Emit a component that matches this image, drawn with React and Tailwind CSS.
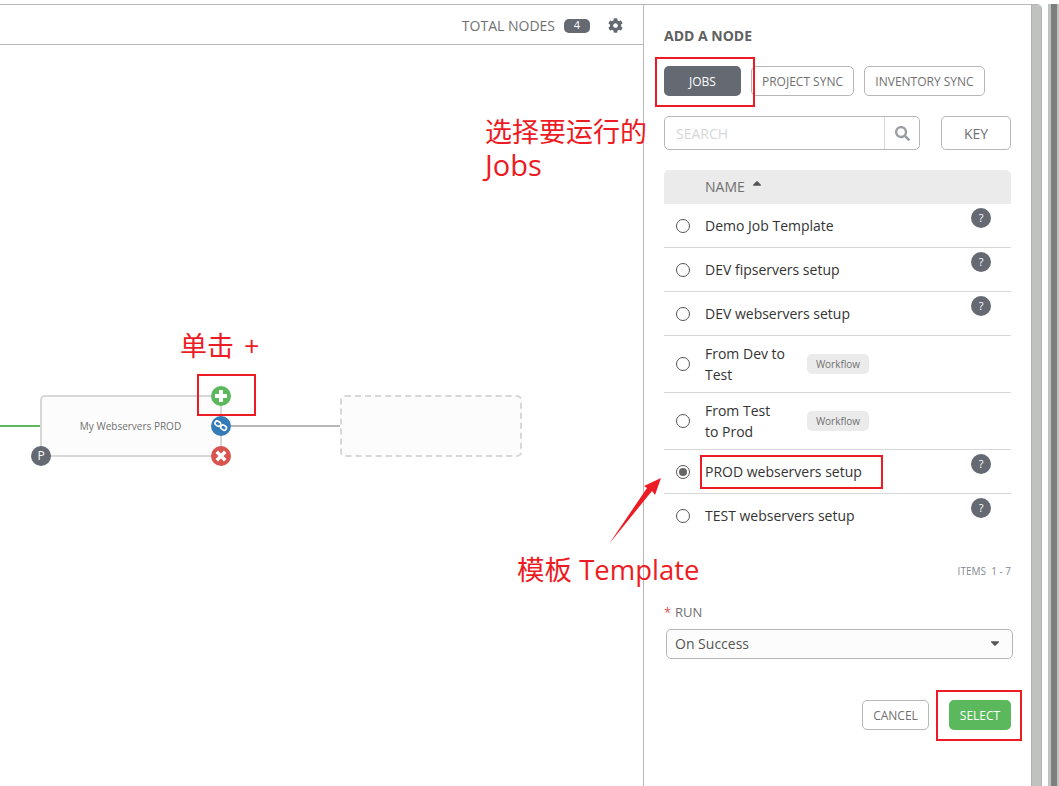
import React from "react";
import { FaCog, FaSearch, FaCaretDown, FaCaretUp } from "react-icons/fa";

const rows = [
  { name: "Demo Job Template", help: true },
  { name: "DEV fipservers setup", help: true },
  { name: "DEV webservers setup", help: true },
  { name: "From Dev to Test", wf: true },
  { name: "From Test to Prod", wf: true },
  { name: "PROD webservers setup", help: true, checked: true },
  { name: "TEST webservers setup", help: true, last: true },
];

function Row({ r }) {
  return (
    <div className={`flex relative border-b ${r.wf ? "h-[57px]" : "h-[44px]"} ${r.last ? "border-transparent" : "border-[#d7d7d7]"}`}>
      <div className="w-[41px] shrink-0 flex items-center">
        <span className="ml-[12px] w-[14px] h-[14px] rounded-full border border-[#555] flex items-center justify-center bg-white">
          {r.checked && <span className="w-[8px] h-[8px] rounded-full bg-[#666]" />}
        </span>
      </div>
      <div className={`flex items-center text-[14px] leading-[21px] text-[#333] ${r.wf ? "w-[81px] mr-[21px]" : "flex-1"}`}>{r.name}</div>
      {r.wf && (
        <div className="flex items-center">
          <span className="h-[20px] w-[62px] pt-[1px] rounded-[5px] bg-[#ebebeb] text-[10px] text-[#707070] flex items-center justify-center">Workflow</span>
        </div>
      )}
      {r.help && (
        <div className="w-[40px] shrink-0 pt-[4px]">
          <span className="w-[20px] h-[20px] rounded-full bg-[#646972] text-white text-[11px] flex items-center justify-center">?</span>
        </div>
      )}
    </div>
  );
}

function Dot({ className, children }) {
  return (
    <span className={`absolute w-[20px] h-[20px] rounded-full flex items-center justify-center text-white ${className}`}>
      {children}
    </span>
  );
}

const btn = "h-[30px] pt-[1px] rounded-[5px] border border-[#b7b7b7] text-[12px] text-[#707070] flex items-center justify-center bg-white";
const note = "absolute text-[27px] leading-[30px] text-[#ed1c24] whitespace-nowrap font-['Open_Sans','Noto_Sans_CJK_SC',sans-serif]";
const box = "absolute border-2 border-[#ed1c24]";

export default function App() {
  return (
    <div className="relative w-[1059px] h-[786px] overflow-hidden bg-white flex pt-[4px] font-['Open_Sans',sans-serif]">
      <div className="w-[1042px] flex border-t border-[#b7b7b7] rounded-tr-[5px] overflow-hidden">
        <div className="w-[643px] shrink-0 flex flex-col">
          <div className="h-[40px] shrink-0 border-b border-[#b7b7b7] flex items-center justify-end pt-[2px] pr-[20px] text-[14px] text-[#707070]">
            <span>TOTAL NODES</span>
            <span className="ml-[9px] w-[26px] h-[14px] rounded-[5px] bg-[#646972] text-white text-[11px] flex items-center justify-center">4</span>
            <FaCog className="ml-[18px] text-[15px] text-[#646972]" />
          </div>
          <div className="relative flex-1">
            <div className="absolute left-0 top-[380px] w-[41px] h-[2px] bg-[#5cb85c]" />
            <div className="absolute left-[231px] top-[380px] w-[110px] h-[2px] bg-[#b7b7b7]" />
            <div className="absolute left-[40px] top-[350px] w-[182px] h-[62px] rounded-[5px] border-2 border-[#d7d7d7] bg-[#fcfcfc] flex items-center justify-center pr-[1px] text-[10px] text-[#707070]">
              My Webservers PROD
            </div>
            <div className="absolute left-[340px] top-[350px] w-[182px] h-[62px] rounded-[5px] border-2 border-dashed border-[#d7d7d7] bg-[#fcfcfc]" />
            <Dot className="left-[211px] top-[341px] bg-[#5cb85c]">
              <svg width="14" height="14" viewBox="0 0 14 14"><path d="M5 1h4v4h4v4H9v4H5V9H1V5h4z" fill="#fff" /></svg>
            </Dot>
            <Dot className="left-[211px] top-[371px] bg-[#337ab7]">
              <svg width="16" height="16" viewBox="0 0 16 16" fill="none" stroke="#fff" strokeWidth="1.6">
                <rect x="1.8" y="3.4" width="6" height="4.4" rx="2.2" transform="rotate(35 4.8 5.6)" />
                <rect x="7.6" y="7.4" width="6" height="4.4" rx="2.2" transform="rotate(35 10.6 9.6)" />
              </svg>
            </Dot>
            <Dot className="left-[211px] top-[401px] bg-[#d9534f]">
              <svg width="14" height="14" viewBox="0 0 14 14"><path d="M4 1.5 7 4.5l3-3L12.5 4l-3 3 3 3L10 12.5l-3-3-3 3L1.5 10l3-3-3-3z" fill="#fff" /></svg>
            </Dot>
            <Dot className="left-[31px] top-[401px] bg-[#646972] text-[12px]">P</Dot>
          </div>
        </div>

        <div className="w-[388px] shrink-0 border-l border-[#b7b7b7] pl-[20px] pr-[20px] flex flex-col">
          <div className="h-[61px] pt-[21px] text-[14px] leading-[19px] font-bold text-[#606060]">ADD A NODE</div>
          <div className="flex gap-[10px]">
            <div className="h-[30px] pt-[1px] w-[77px] rounded-[5px] bg-[#646972] text-white text-[12px] flex items-center justify-center">JOBS</div>
            <div className={`${btn} w-[103px]`}>PROJECT SYNC</div>
            <div className={`${btn} w-[121px]`}>INVENTORY SYNC</div>
          </div>
          <div className="flex justify-between mt-[20px]">
            <div className="w-[256px] h-[34px] rounded-[5px] border border-[#b7b7b7] flex">
              <div className="flex-1 flex items-center pl-[11px] text-[14px] text-[#d7d7d7]">SEARCH</div>
              <div className="w-[35px] pt-[1px] border-l border-[#d7d7d7] flex items-center justify-center">
                <FaSearch className="text-[15px] text-[#9a9ea3]" />
              </div>
            </div>
            <div className={`${btn} !h-[34px] w-[70px] !text-[14px]`}>KEY</div>
          </div>
          <div className="mt-[20px] h-[34px] pb-[2px] rounded-t-[5px] bg-[#ebebeb] flex items-center pl-[41px] text-[14px] text-[#707070]">
            NAME
            <FaCaretUp className="ml-[5px] -mt-[6px] text-[14px] text-[#555]" />
          </div>
          {rows.map((r) => (
            <Row key={r.name} r={r} />
          ))}
          <div className="mt-[26px] text-right text-[10px] leading-[14px] text-[#848992]">ITEMS&nbsp;&nbsp;1 - 7</div>
          <div className="mt-[25px] text-[13px] leading-[18px] text-[#707070] flex">
            <span className="w-[11px] text-[#d9534f]">*</span>RUN
          </div>
          <div className="mt-[8px] ml-[2px] -mr-[2px] h-[30px] pb-[2px] rounded-[5px] border border-[#b7b7b7] bg-[#fcfcfc] flex items-center justify-between pl-[8px] pr-[10px] text-[14px] text-[#555]">
            On Success
            <FaCaretDown className="text-[14px] text-[#555]" />
          </div>
          <div className="mt-[41px] flex justify-end gap-[20px]">
            <div className={`${btn} w-[67px]`}>CANCEL</div>
            <div className="h-[30px] pt-[1px] w-[62px] rounded-[5px] bg-[#5cb85c] text-white text-[12px] flex items-center justify-center">SELECT</div>
          </div>
        </div>

        <div className="w-[11px] shrink-0 bg-[#c0c2c0] border-x border-[#b0b2b0]" />
      </div>

      <div className="ml-[6px] flex-1 flex bg-[#c0c2c0]">
        <div className="ml-[3px] w-[6px] bg-[#7b807e]" />
      </div>

      <div className={`${note} left-[485px] top-[117px]`}>选择要运行的</div>
      <div className={`${note} !text-[29px] left-[485px] top-[150px]`}>Jobs</div>
      <div className={`${note} [word-spacing:3px] left-[180px] top-[331px]`}>单击 +</div>
      <div className={`${note} !text-[27.5px] left-[517px] top-[555px]`}>模板 Template</div>

      <div className={`${box} left-[655px] top-[57px] w-[100px] h-[50px]`} />
      <div className={`${box} left-[197px] top-[374px] w-[59px] h-[42px]`} />
      <div className={`${box} left-[700px] top-[455px] w-[183px] h-[34px]`} />
      <div className={`${box} left-[936px] top-[690px] w-[86px] h-[51px]`} />

      <svg className="absolute left-[600px] top-[470px]" width="70" height="80" viewBox="600 470 70 80">
        <polygon points="661,478 655,495 652,491 609,544 647,488 644,486" fill="#ed1c24" />
      </svg>
    </div>
  );
}
